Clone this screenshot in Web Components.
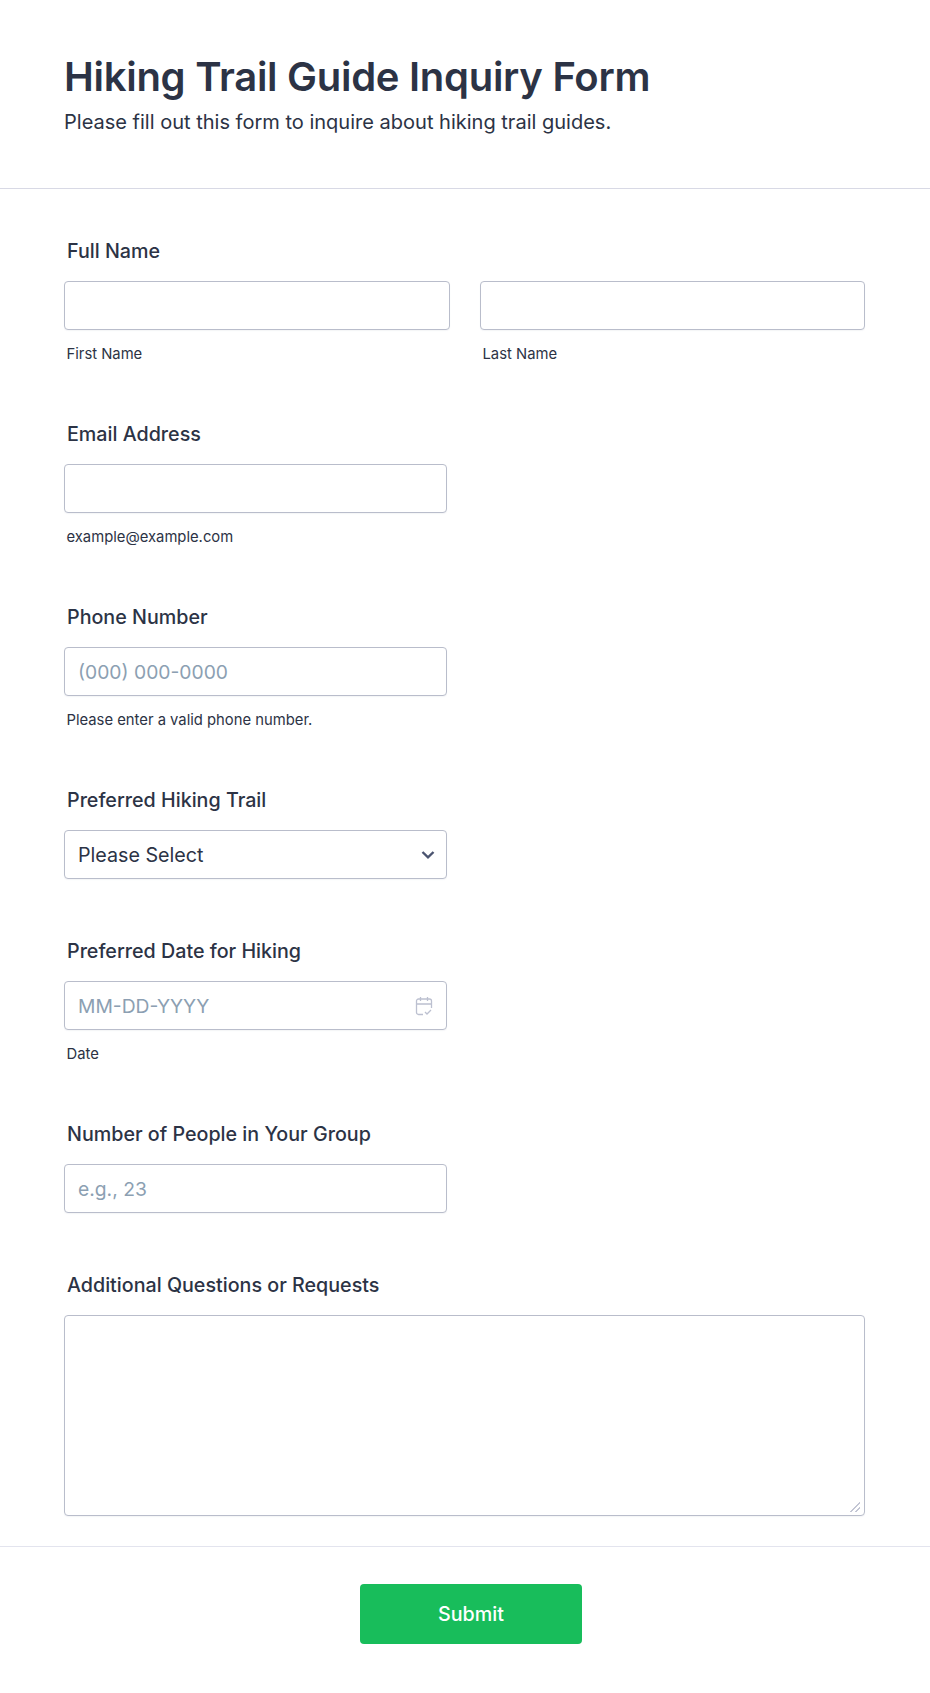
<!DOCTYPE html>
<html lang="en">
<head>
<meta charset="utf-8">
<title>Hiking Trail Guide Inquiry Form</title>
<style>
  html, body { margin: 0; background: #fff; }
  body { font-family: Inter, "Liberation Sans", sans-serif; color: #2c3345; }
</style>
</head>
<body>
<inquiry-form>
  <form-header heading="Hiking Trail Guide Inquiry Form" sub="Please fill out this form to inquire about hiking trail guides."></form-header>
  <form-body>
    <form-field label="Full Name">
      <div style="display:grid;grid-template-columns:386px 385px;gap:30px">
        <text-box hint="First Name" width="386"></text-box>
        <text-box hint="Last Name" width="385"></text-box>
      </div>
    </form-field>
    <form-field label="Email Address">
      <text-box hint="example@example.com"></text-box>
    </form-field>
    <form-field label="Phone Number">
      <text-box placeholder="(000) 000-0000" hint="Please enter a valid phone number."></text-box>
    </form-field>
    <form-field label="Preferred Hiking Trail">
      <select-box placeholder="Please Select"></select-box>
    </form-field>
    <form-field label="Preferred Date for Hiking">
      <date-box placeholder="MM-DD-YYYY" hint="Date"></date-box>
    </form-field>
    <form-field label="Number of People in Your Group">
      <text-box placeholder="e.g., 23"></text-box>
    </form-field>
    <form-field label="Additional Questions or Requests">
      <area-box></area-box>
    </form-field>
  </form-body>
  <form-footer label="Submit"></form-footer>
</inquiry-form>

<script>
const boxCss = `
  input, select, textarea {
    display: block;
    box-sizing: border-box;
    width: 100%;
    height: 49px;
    margin: 0;
    padding: 0 13px;
    background: #fff;
    border: 1px solid #b9bdcb;
    border-radius: 4px;
    box-shadow: 0 1px 1px rgba(120, 125, 150, .08);
    font: 400 19.3px/28px Inter, "Liberation Sans", sans-serif;
    color: #2c3345;
    outline: none;
  }
  select { font-size: 19.7px; }
  input::placeholder { color: #8c9fb2; opacity: 1; }
  .hint {
    margin: 16px 0 0 2.5px;
    font-size: 14.8px;
    line-height: 16px;
    color: #2c3345;
  }
`;

class InquiryForm extends HTMLElement {
  constructor() {
    super();
    this.attachShadow({ mode: "open" });
    this.shadowRoot.innerHTML = `
      <style>
        :host { display: block; width: 930px; min-height: 1693px; background: #fff; }
      </style>
      <slot></slot>
    `;
  }
}

class FormHeader extends HTMLElement {
  constructor() {
    super();
    this.attachShadow({ mode: "open" });
  }
  connectedCallback() {
    this.shadowRoot.innerHTML = `
      <style>
        :host { display: block; box-sizing: border-box; height: 189px; padding: 50px 64px 0; border-bottom: 1px solid #d8d9e5; }
        h1 { margin: 0; font-size: 40px; line-height: 54px; font-weight: 600; letter-spacing: -.28px; color: #2c3345; }
        p { margin: 3px 0 0; font-size: 20.03px; line-height: 30px; color: #2c3345; }
      </style>
      <h1>${this.getAttribute("heading")}</h1>
      <p>${this.getAttribute("sub")}</p>
    `;
  }
}

class FormBody extends HTMLElement {
  constructor() {
    super();
    this.attachShadow({ mode: "open" });
    this.shadowRoot.innerHTML = `
      <style>
        :host { display: flex; flex-direction: column; padding: 47px 64px 30px; }
      </style>
      <slot></slot>
    `;
  }
}

class FormField extends HTMLElement {
  constructor() {
    super();
    this.attachShadow({ mode: "open" });
  }
  connectedCallback() {
    this.shadowRoot.innerHTML = `
      <style>
        :host { display: block; margin-bottom: 57px; }
        :host(:last-child) { margin-bottom: 0; }
        label { display: block; margin: 0 0 15px 3px; font-size: 19.7px; line-height: 30px; font-weight: 500; color: #2c3345; }
      </style>
      <label>${this.getAttribute("label")}</label>
      <slot></slot>
    `;
  }
}

class TextBox extends HTMLElement {
  constructor() {
    super();
    this.attachShadow({ mode: "open" });
  }
  connectedCallback() {
    const hint = this.getAttribute("hint");
    const width = this.getAttribute("width") || 383;
    this.shadowRoot.innerHTML = `
      <style>
        :host { display: block; width: ${width}px; }
        ${boxCss}
      </style>
      <input type="text" placeholder="${this.getAttribute("placeholder") || ""}">
      ${hint ? `<div class="hint">${hint}</div>` : ""}
    `;
  }
}

class SelectBox extends HTMLElement {
  constructor() {
    super();
    this.attachShadow({ mode: "open" });
  }
  connectedCallback() {
    this.shadowRoot.innerHTML = `
      <style>
        :host { display: block; position: relative; width: 383px; }
        ${boxCss}
        select { appearance: none; }
        svg { position: absolute; top: 20px; right: 12px; pointer-events: none; }
      </style>
      <select><option>${this.getAttribute("placeholder")}</option></select>
      <svg width="14" height="10" viewBox="0 0 14 10" fill="none">
        <path d="M1.500 2l5.500 5.300L12.500 2" stroke="#4b5470" stroke-width="2.4"/>
      </svg>
    `;
  }
}

class DateBox extends HTMLElement {
  constructor() {
    super();
    this.attachShadow({ mode: "open" });
  }
  connectedCallback() {
    this.shadowRoot.innerHTML = `
      <style>
        :host { display: block; position: relative; width: 383px; }
        ${boxCss}
        svg { position: absolute; top: 15px; right: 14px; pointer-events: none; }
      </style>
      <input type="text" placeholder="${this.getAttribute("placeholder")}">
      <svg width="18" height="20" viewBox="0 0 18 20" fill="none" stroke="#bcc0d0" stroke-width="1.3">
        <path d="M8 18.500H3.500a2 2 0 0 1-2-2V5a2 2 0 0 1 2-2h11a2 2 0 0 1 2 2v7"/>
        <path d="M1.500 8h15M5.500 1v4M12.500 1v4"/>
        <path d="M10 16l2 2 4-4"/>
      </svg>
      <div class="hint">${this.getAttribute("hint")}</div>
    `;
  }
}

class AreaBox extends HTMLElement {
  constructor() {
    super();
    this.attachShadow({ mode: "open" });
    this.shadowRoot.innerHTML = `
      <style>
        :host { display: block; width: 801px; }
        ${boxCss}
        textarea { height: 201px; padding: 12px 13px; }
        textarea::-webkit-resizer {
          background: linear-gradient(135deg, transparent 46%, #c3c6d4 46% 56%, transparent 56% 70%, #c3c6d4 70% 80%, transparent 80%) no-repeat 1px 2px / 10px 10px;
        }
      </style>
      <textarea></textarea>
    `;
  }
}

class FormFooter extends HTMLElement {
  constructor() {
    super();
    this.attachShadow({ mode: "open" });
  }
  connectedCallback() {
    this.shadowRoot.innerHTML = `
      <style>
        :host { display: flex; justify-content: center; box-sizing: border-box; padding: 37px 0 49px 12px; border-top: 1px solid #e3e4ee; }
        button {
          width: 222px;
          height: 60px;
          border: 0;
          border-radius: 4px;
          background: #18bd5b;
          color: #fff;
          font: 500 19.7px Inter, "Liberation Sans", sans-serif;
        }
      </style>
      <button type="button">${this.getAttribute("label")}</button>
    `;
  }
}

customElements.define("inquiry-form", InquiryForm);
customElements.define("form-header", FormHeader);
customElements.define("form-body", FormBody);
customElements.define("form-field", FormField);
customElements.define("text-box", TextBox);
customElements.define("select-box", SelectBox);
customElements.define("date-box", DateBox);
customElements.define("area-box", AreaBox);
customElements.define("form-footer", FormFooter);
</script>
</body>
</html>
